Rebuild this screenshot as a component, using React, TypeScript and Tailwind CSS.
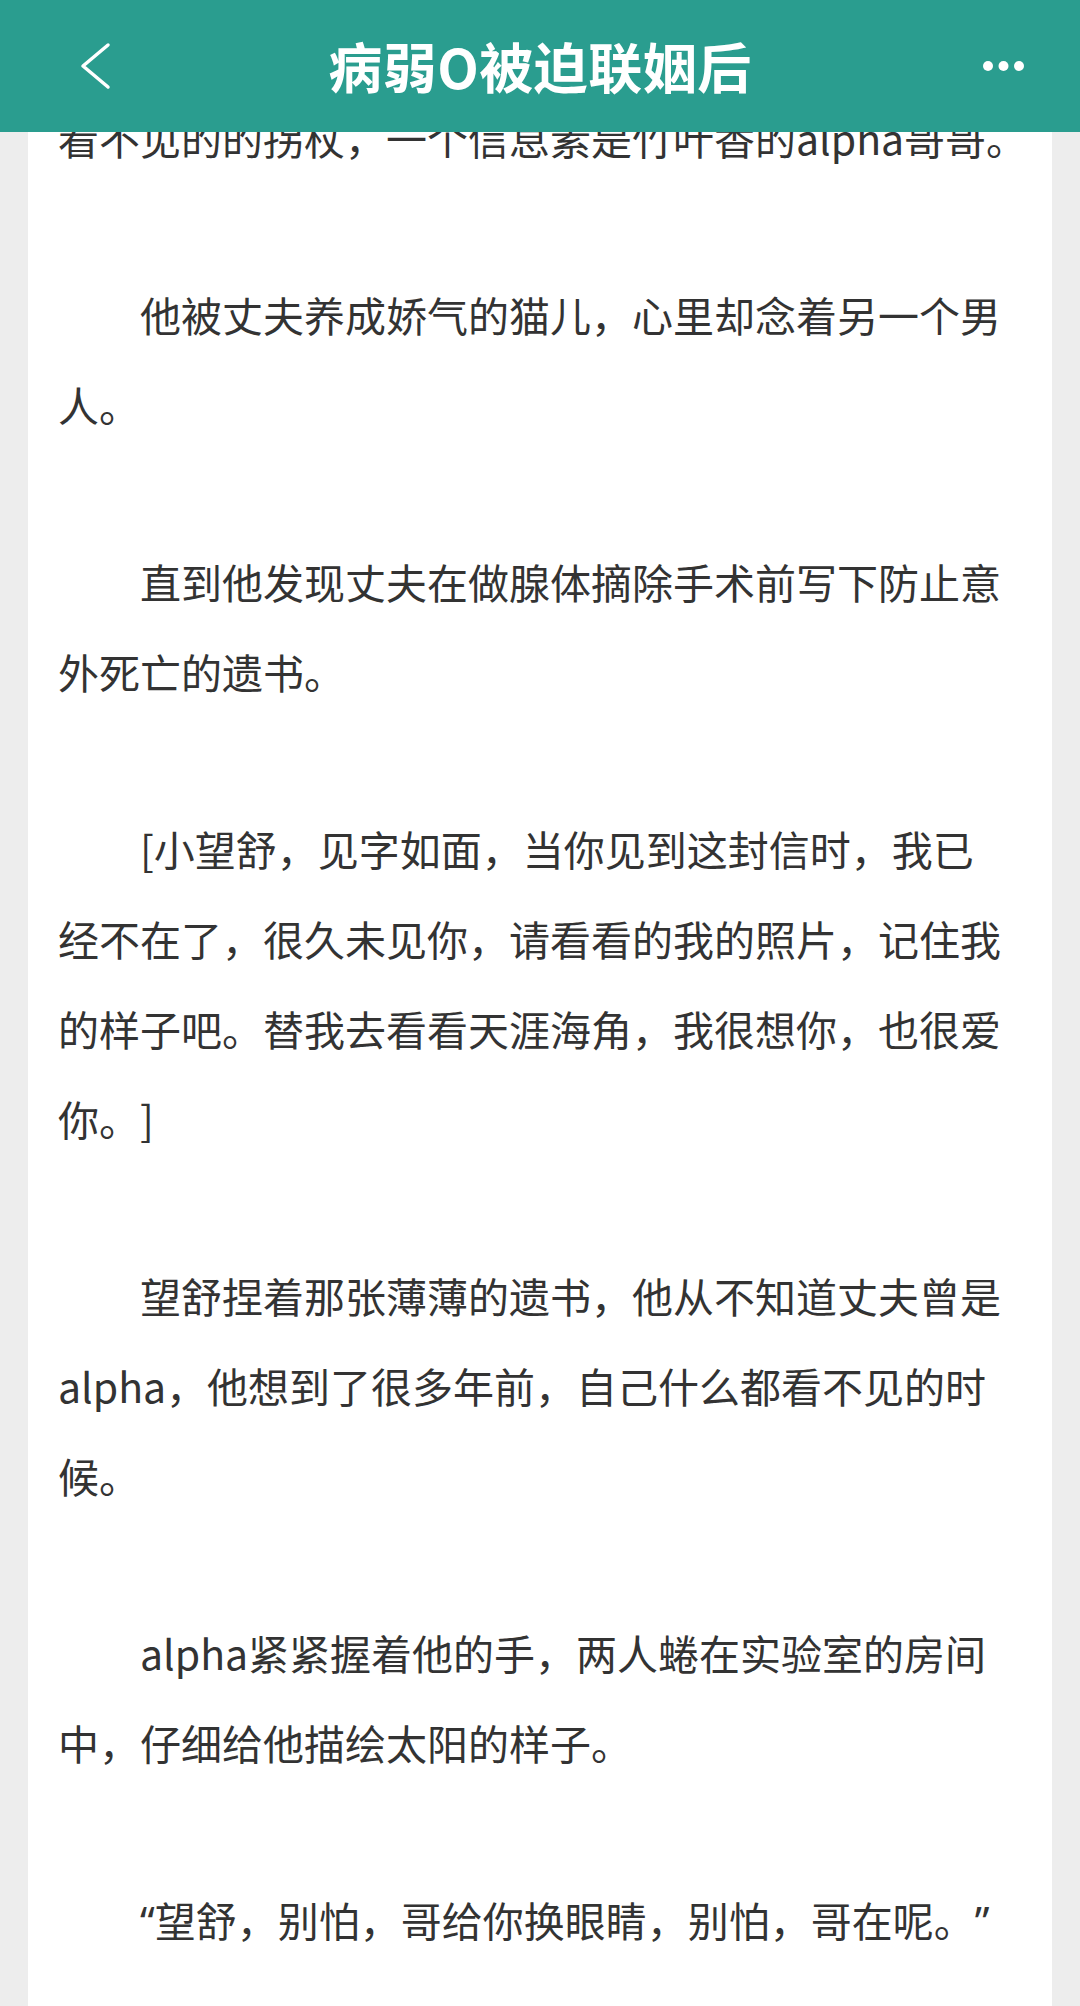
import type { ReactNode } from "react";

// curly quotes in the reference are narrow (latin width), not fullwidth
const Q = ({ children }: { children: ReactNode }) => (
  <span className="[font-family:'Noto_Sans',sans-serif]">{children}</span>
);

// each paragraph is written as the lines the page shows
const paragraphs: { lines: ReactNode[]; indent: boolean }[] = [
  { lines: ["看不见的的拐杖，一个信息素是竹叶香的alpha哥哥。"], indent: false },
  { lines: ["他被丈夫养成娇气的猫儿，心里却念着另一个男", "人。"], indent: true },
  { lines: ["直到他发现丈夫在做腺体摘除手术前写下防止意", "外死亡的遗书。"], indent: true },
  {
    lines: [
      "[小望舒，见字如面，当你见到这封信时，我已",
      "经不在了，很久未见你，请看看的我的照片，记住我",
      "的样子吧。替我去看看天涯海角，我很想你，也很爱",
      "你。]",
    ],
    indent: true,
  },
  {
    lines: [
      "望舒捏着那张薄薄的遗书，他从不知道丈夫曾是",
      "alpha，他想到了很多年前，自己什么都看不见的时",
      "候。",
    ],
    indent: true,
  },
  { lines: ["alpha紧紧握着他的手，两人蜷在实验室的房间", "中，仔细给他描绘太阳的样子。"], indent: true },
  {
    lines: [
      <>
        <Q>“</Q>望舒，别怕，哥给你换眼睛，别怕，哥在呢。<Q>”</Q>
      </>,
    ],
    indent: true,
  },
];

function Header() {
  return (
    <div className="absolute inset-x-0 top-0 z-10 flex h-[132px] items-center bg-[#2a9d8f] text-white">
      <div className="flex w-[160px] items-center">
        <svg className="ml-[76px]" width="40" height="50" viewBox="0 0 40 50" fill="none">
          <polyline
            points="32,4 7,25 32,46"
            stroke="white"
            strokeWidth="3.5"
            strokeLinecap="round"
            strokeLinejoin="round"
          />
        </svg>
      </div>
      <h1 className="flex-1 text-center text-[54px] font-bold leading-none tracking-[0.5px] [font-family:'Noto_Sans_CJK_SC',sans-serif]">
        病弱O被迫联姻后
      </h1>
      <div className="flex w-[160px] items-center justify-end pr-[55px]">
        <svg width="50" height="12" viewBox="0 0 50 12" fill="white">
          <circle cx="13" cy="6" r="5" />
          <circle cx="28.5" cy="6" r="5" />
          <circle cx="44" cy="6" r="5" />
        </svg>
      </div>
    </div>
  );
}

export default function App() {
  return (
    <div className="relative h-[2006px] overflow-hidden bg-[#ededed]">
      <Header />
      <div className="mx-[28px] h-full bg-white px-[30px] pt-[92px]">
        <div className="flex flex-col gap-[87px] text-[41px] leading-[90px] text-[#333333] [font-family:'Noto_Sans_CJK_SC',sans-serif] [text-spacing-trim:space-all]">
          {paragraphs.map((p, i) => (
            <p key={i} className="whitespace-nowrap">
              {p.lines.map((line, j) => (
                <span key={j} className={j === 0 && p.indent ? "block indent-[2em]" : "block"}>
                  {line}
                </span>
              ))}
            </p>
          ))}
        </div>
      </div>
    </div>
  );
}
